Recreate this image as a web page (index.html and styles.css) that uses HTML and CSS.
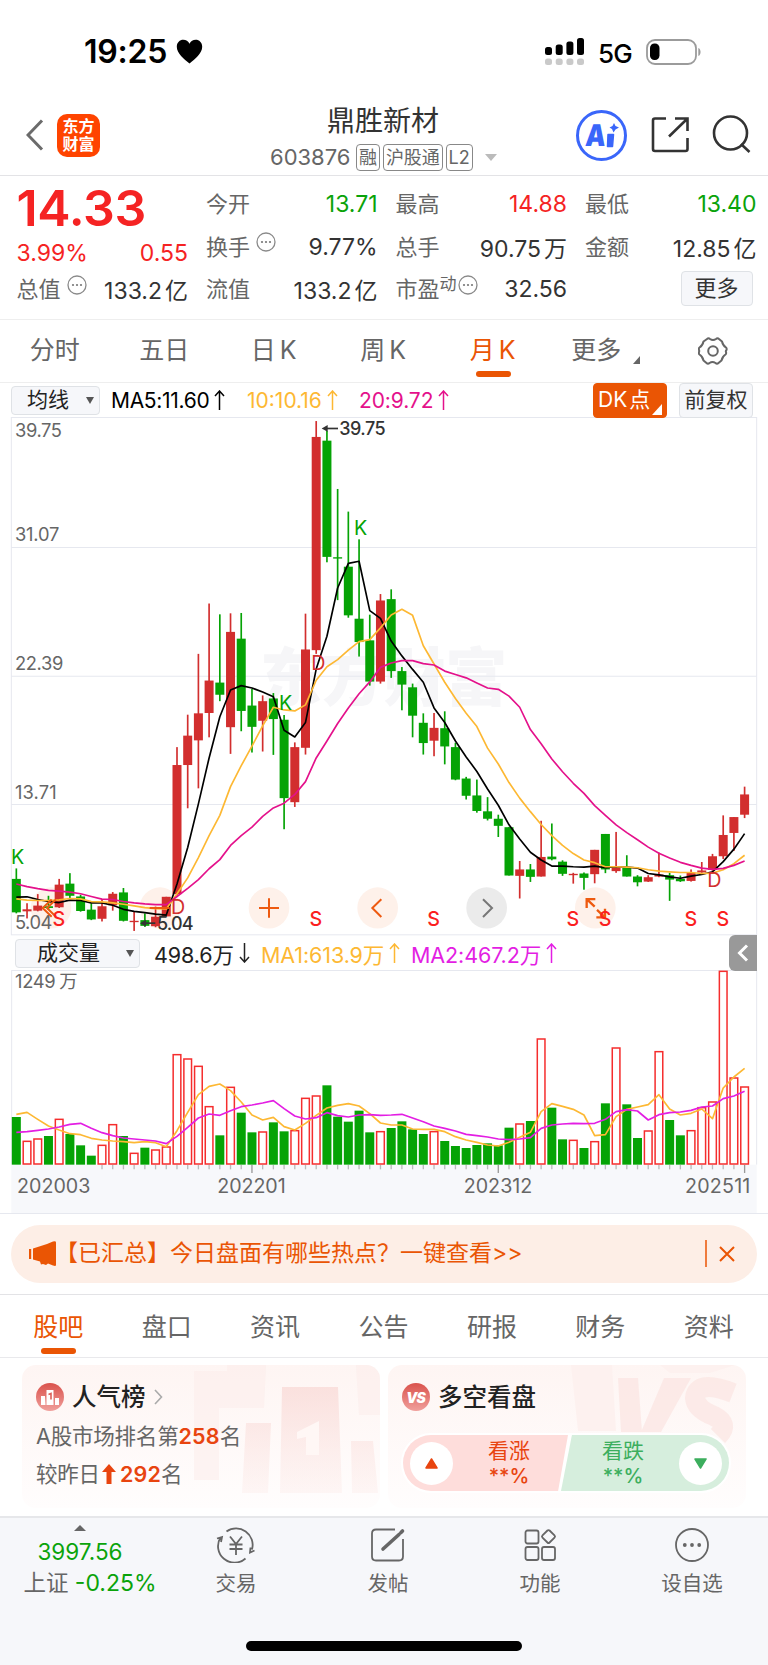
FILE: index.html
```html
<!DOCTYPE html>
<html lang="zh-CN">
<head>
    <meta charset="UTF-8">
    <meta name="viewport" content="width=device-width, initial-scale=1.0">
    <title>鼎胜新材 603876</title>
    <link rel="stylesheet" href="styles.css">
</head>
<body>
    <div class="status-bar">
        <span class="time">19:25</span>
        <svg class="heart" width="27" height="25" viewBox="0 0 27 25"><path d="M13.500 24.500C8 20 .8 14.500 .8 7.800.8 3.500 3.800.8 7.300.8c2.700 0 5 1.500 6.200 4C14.700 2.300 17 .8 19.700.8c3.500 0 6.500 2.700 6.500 7 0 6.700-7.200 12.200-12.700 16.700z"/></svg>
        <svg class="signal" width="40" height="28" viewBox="0 0 40 28">
            <g fill="#000"><rect x="0" y="9" width="7" height="8" rx="2.500"/><rect x="10.700" y="6.500" width="7" height="10.500" rx="2.500"/><rect x="21.400" y="3.500" width="7" height="13.500" rx="2.500"/><rect x="32" y="0" width="7" height="17" rx="2.500"/></g>
            <g fill="#c9c9c9"><rect x="0" y="20.500" width="7" height="6.500" rx="2.500"/><rect x="10.700" y="20.500" width="7" height="6.500" rx="2.500"/><rect x="21.400" y="20.500" width="7" height="6.500" rx="2.500"/><rect x="32" y="20.500" width="7" height="6.500" rx="2.500"/></g>
        </svg>
        <span class="network">5G</span>
        <svg class="battery" width="56" height="26" viewBox="0 0 56 26"><rect x="1" y="1" width="49" height="24" rx="8" fill="none" stroke="#9b9b9b" stroke-width="1.800"/><rect x="4" y="4.500" width="9.500" height="16.500" rx="4.500"/><path d="M52.300 9v8c3-1 3-7 0-8z" fill="#9b9b9b"/></svg>
    </div>

    <div class="header">
        <svg class="back" width="18" height="32" viewBox="0 0 18 32"><path d="M16 1.500 2 16l14 14.500" fill="none" stroke="#6b6b6b" stroke-width="3"/></svg>
        <div class="logo">东方<br>财富</div>
        <div class="stock">
            <div class="stock-name">鼎胜新材</div>
            <div class="stock-code"><span class="code">603876</span><i class="tag">融</i><i class="tag">沪股通</i><i class="tag">L2</i><b class="drop"></b></div>
        </div>
        <div class="ai"><span>A</span><svg width="13" height="25" viewBox="0 0 13 25"><path d="M2 11.500h5.500l-1 12H1.500z" fill="#3a66fa" stroke="#3a66fa" stroke-width="1.500" stroke-linejoin="round"/><path d="M8 0l1.500 3L13 4.500 9.500 6.500 7.500 9.500 6 6 3.500 4.500 6.500 3z" fill="#3a66fa"/></svg></div>
        <svg class="share" width="38" height="38" viewBox="0 0 38 38" fill="none" stroke="#333" stroke-width="2.600"><path d="M15 2.500H4q-2 0-2 2V33q0 2 2 2h30.500q2 0 2-2V22"/><path d="M24 2.500h12.500V15M36 3 18 20.500"/></svg>
        <svg class="search" width="39" height="39" viewBox="0 0 39 39" fill="none" stroke="#333" stroke-width="2.600"><circle cx="18.500" cy="18" r="16.500"/><path d="m29 29 8.500 8"/></svg>
    </div>

    <div class="quote">
        <div class="quote-col">
            <div class="price">14.33</div>
            <div class="row change red"><span>3.99%</span><span>0.55</span></div>
            <div class="row"><label>总值<svg class="dots" width="20" height="20"><use href="#more-dots"/></svg></label><span>133.2<em>亿</em></span></div>
        </div>
        <div class="quote-col">
            <div class="row"><label>今开</label><span class="green">13.71</span></div>
            <div class="row"><label>换手<svg class="dots" width="20" height="20"><use href="#more-dots"/></svg></label><span>9.77%</span></div>
            <div class="row"><label>流值</label><span>133.2<em>亿</em></span></div>
        </div>
        <div class="quote-col">
            <div class="row"><label>最高</label><span class="red">14.88</span></div>
            <div class="row"><label>总手</label><span>90.75<em>万</em></span></div>
            <div class="row"><label>市盈<sup>动</sup><svg class="dots near" width="20" height="20"><use href="#more-dots"/></svg></label><span>32.56</span></div>
        </div>
        <div class="quote-col">
            <div class="row"><label>最低</label><span class="green">13.40</span></div>
            <div class="row"><label>金额</label><span>12.85<em>亿</em></span></div>
            <div class="row"><button class="more">更多</button></div>
        </div>
    </div>

    <div class="period-tabs">
        <span>分时</span><span>五日</span><span>日<u>K</u></span><span>周<u>K</u></span><span class="active">月<u>K</u></span><span class="with-corner">更多<i></i></span>
        <svg width="30" height="28" viewBox="0 0 30 28" fill="none" stroke="#666" stroke-width="2"><path d="M9 2q1.500-1.500 3 0 3 2 6 0 1.500-1.500 3 0l3 2.500q.8 4 4 6 1 .8.500 2.500-1 1-.5 2 .5 1.700-.5 2.500-3.200 2-4 6l-3 2.500q-1.500 1.500-3 0-3-2-6 0-1.500 1.500-3 0l-3-2.500q-.8-4-4-6-1-.8-.5-2.500.5-1 0-2-.5-1.700.5-2.500 3.200-2 4-6z"/><circle cx="15" cy="14" r="4.800"/></svg>
    </div>

    <div class="ma-bar">
        <div class="select select-ma">均线<i></i></div>
        <span class="ma5">MA5:11.60<svg class="arrow"><use href="#arrow-up"/></svg></span>
        <span class="ma10">10:10.16<svg class="arrow"><use href="#arrow-up"/></svg></span>
        <span class="ma20">20:9.72<svg class="arrow"><use href="#arrow-up"/></svg></span>
        <button class="dk">DK<b>点</b><i></i></button>
        <button class="adjust">前复权</button>
    </div>

    <svg id="kline" class="kline" width="768" height="519" viewBox="0 21 2304 1536" preserveAspectRatio="none"></svg>

    <div class="volume-bar">
        <div class="select select-vol">成交量<i></i></div>
        <span class="vol-now">498.6万<svg class="arrow"><use href="#arrow-down"/></svg></span>
        <span class="vol-ma1">MA1:613.9万<svg class="arrow"><use href="#arrow-up"/></svg></span>
        <span class="vol-ma2">MA2:467.2万<svg class="arrow"><use href="#arrow-up"/></svg></span>
        <div class="collapse"><svg width="12" height="18" viewBox="0 0 12 18"><path d="M10 1.500 2.500 9l7.500 7.500" fill="none" stroke="#fff" stroke-width="3"/></svg></div>
    </div>

    <svg id="volume" class="volume" width="768" height="244" viewBox="0 120 2304 732"></svg>

    <div class="notice">
        <svg width="28" height="26" viewBox="0 0 28 26" fill="#ea5504"><path d="M0 8h2.200v10H0zM4 7.500 18 3l6-2.500q3-1 3 1v22.500q0 1.500-3 .5l-5-2-2 1.500-3-1-2 .5-1-3-7-2z"/></svg>
        <span>【已汇总】今日盘面有哪些热点？一键查看&gt;&gt;</span>
        <svg class="close" width="24" height="28" viewBox="0 0 24 28" fill="none" stroke="#ea5504" stroke-width="1.800"><path d="M1 0v27" stroke-width="1.500"/></svg>
        <svg class="cross" width="16" height="16" viewBox="0 0 16 16" fill="none" stroke="#ea5504" stroke-width="2"><path d="m1 1 14 14M15 1 1 15"/></svg>
    </div>

    <div class="info-tabs">
        <span class="active">股吧</span><span>盘口</span><span>资讯</span><span>公告</span><span>研报</span><span>财务</span><span>资料</span>
    </div>

    <div class="cards">
        <div class="card">
            <svg class="card-bg" width="358" height="143" viewBox="0 0 358 143">
                <defs><linearGradient id="fade" x1="0" y1="0" x2="0" y2="1"><stop offset="0" stop-color="#f9d9d6" stop-opacity=".75"/><stop offset="1" stop-color="#fbe6e3" stop-opacity=".3"/></linearGradient></defs>
                <path d="M172 6h33V0h39l-2 43h-45v72h-25zM334 0h24v50h-21z" fill="#fcecea" opacity=".5"/>
                <path d="M260 22h56l4 106h-62zM224 58h25l-3 70h-26zM329 76h22l5 52h-26z" fill="url(#fade)"/>
                <path d="M275 67 297 56v34h-13V72l-9 2z" fill="#fff7f5"/>
            </svg>
            <div class="card-title">
                <svg width="28" height="28" viewBox="0 0 28 28"><use href="#red-ball"/><path d="M5 13h4l.5 9H5zM10.500 7h7v15h-7zM19 15h4v7h-4z" fill="#fff"/><path d="m12.500 11.500 2.500-1v6" stroke="#dc6059" fill="none" stroke-width="1.600"/></svg>
                人气榜
                <svg width="9" height="16" viewBox="0 0 9 16"><path d="m1 1 6.500 7L1 15" fill="none" stroke="#aaa" stroke-width="1.600"/></svg>
            </div>
            <p>A股市场排名第<b>258</b>名</p>
            <p class="compare">较昨日<svg width="14" height="20" viewBox="0 0 14 20"><path d="M7 0 14 8H9.500v12h-5V8H0z" fill="#e8440f"/></svg><b>292</b>名</p>
        </div>
        <div class="card">
            <svg class="card-bg" width="358" height="143" viewBox="0 0 358 143">
                <path d="M183 0h41l4 66h-38zM272 0h75l-25 8h-40z" fill="#fdf1ef"/>
                <path d="M230 13h20l4 54h-21zM276 13h27L273 67h-20z" fill="#fbe6e3" opacity=".8"/>
                <path d="M345 28q-36-14-38 5 1 11 19 18 16 8 4 20" fill="none" stroke="#fbe6e3" stroke-width="20" opacity=".75"/>
            </svg>
            <div class="card-title">
                <svg width="28" height="28" viewBox="0 0 28 28"><use href="#red-ball"/><text x="13.500" y="19.500" text-anchor="middle" class="vs">VS</text></svg>
                多空看盘
            </div>
            <div class="vote">
                <div class="vote-up"><i><svg width="13" height="11" viewBox="0 0 13 11"><path d="M6.500 1 12 10H1z" fill="#e8440f" stroke="#e8440f" stroke-width="1.500" stroke-linejoin="round"/></svg></i><span>看涨<br><b>**%</b></span></div>
                <div class="vote-down"><span>看跌<br><b>**%</b></span><i><svg width="13" height="11" viewBox="0 0 13 11"><path d="M6.500 10 12 1H1z" fill="#3cae5e" stroke="#3cae5e" stroke-width="1.500" stroke-linejoin="round"/></svg></i></div>
            </div>
        </div>
    </div>

    <div class="bottom-bar">
        <div class="index">
            <i></i>
            <span class="green">3997.56</span>
            <span class="index-change">上证 <b class="green">-0.25%</b></span>
        </div>
        <div class="nav-item">
            <svg width="40" height="36" viewBox="0 0 40 36" fill="none" stroke="#666" stroke-width="1.800"><path d="M10.500 4.500a16.500 16.500 0 0 1 25.500 18M29.500 31.500A16.500 16.500 0 0 1 4.500 10.500M1 11.500l5-1.500-1 5M38.500 23.500l-4.500 2 .5-5M14 9.500l6 7.500 6-7.500M13.500 17.500h13M13.500 22h13M20 17v11"/></svg>
            交易
        </div>
        <div class="nav-item">
            <svg width="36" height="36" viewBox="0 0 36 36" fill="none" stroke="#666" stroke-width="1.800"><path d="M25 2.500H6q-4 0-4 4v23q0 4 4 4h23q4 0 4-4V12"/><path d="m13 22 16-14.500M31 5.500l1.500-1.500" stroke-width="3.600" stroke-linecap="round"/></svg>
            发帖
        </div>
        <div class="nav-item">
            <svg width="36" height="36" viewBox="0 0 36 36" fill="none" stroke="#666" stroke-width="1.800"><rect x="3.500" y="3.500" width="13" height="13" rx="2"/><rect x="3.500" y="20" width="13" height="13" rx="2"/><rect x="20" y="20" width="13" height="13" rx="2"/><rect x="21.500" y="4.500" width="10" height="10" rx="1.500" transform="rotate(45 26.500 9.500)"/></svg>
            功能
        </div>
        <div class="nav-item">
            <svg width="36" height="36" viewBox="0 0 36 36"><circle cx="18" cy="18" r="16" fill="none" stroke="#666" stroke-width="1.800"/><g fill="#666"><circle cx="10.800" cy="18" r="1.900"/><circle cx="18" cy="18" r="1.900"/><circle cx="25.200" cy="18" r="1.900"/></g></svg>
            设自选
        </div>
        <div class="home-indicator"></div>
    </div>

    <!-- 公用图标 -->
    <svg class="symbols">
        <symbol id="more-dots" viewBox="0 0 20 20"><circle cx="10" cy="10" r="9" fill="none" stroke="#8a8a8a" stroke-width="1.300"/><g fill="#777"><circle cx="6" cy="10" r="1.100"/><circle cx="10" cy="10" r="1.100"/><circle cx="14" cy="10" r="1.100"/></g></symbol>
        <symbol id="arrow-up" viewBox="0 0 11 20"><path d="M5.500 20V1M1 6l4.500-5L10 6" fill="none" stroke="currentColor" stroke-width="1.500"/></symbol>
        <symbol id="arrow-down" viewBox="0 0 11 20"><path d="M5.500 0v19M1 14l4.500 5 4.500-5" fill="none" stroke="currentColor" stroke-width="1.500"/></symbol>
        <symbol id="red-ball" viewBox="0 0 28 28"><linearGradient id="ball" x1="0" y1="0" x2="0" y2="1"><stop offset="0" stop-color="#da524c"/><stop offset="1" stop-color="#f0a09c"/></linearGradient><circle cx="14" cy="14" r="14" fill="url(#ball)"/></symbol>
    </svg>

    <script src="chart.js"></script>
</body>
</html>
```
FILE: styles.css
```css
* {
    box-sizing: border-box;
}

body {
    margin: 0;
    width: 768px;
    height: 1665px;
    overflow: hidden;
    background: #fff;
    color: #333;
    font-family: Inter, "Noto Sans CJK SC", sans-serif;
    font-size: 22px;
}

i, em, u {
    font-style: normal;
    text-decoration: none;
}

button {
    font: inherit;
    color: #333;
    padding: 0;
    background: #f6f7fa;
    border: 1px solid #dfe2e6;
    border-radius: 4px;
}

.red { color: #f52323; }
.green { color: #0aa30a; }

.symbols {
    position: absolute;
    width: 0;
    height: 0;
}

/* 状态栏 */
.status-bar {
    display: flex;
    align-items: center;
    height: 103px;
    padding: 0 66px 0 84px;
    color: #000;
}

.time {
    width: 83px;
    font-size: 32px;
    font-weight: 600;
    letter-spacing: -0.2px;
}

.heart { margin-left: 9px; }
.signal { margin-left: auto; }

.network {
    width: 34px;
    margin: 3px 14px 0 13px;
    font-size: 26px;
    font-weight: 500;
    letter-spacing: -0.8px;
}

/* 标题栏 */
.header {
    display: flex;
    align-items: center;
    height: 73px;
    padding: 0 17px 9px 26px;
    border-bottom: 1px solid #e3e3e6;
}

.back, .logo { margin-top: 1px; }

.logo {
    width: 43px;
    height: 43px;
    margin-left: 13px;
    border-radius: 10px;
    background: #ff4400;
    color: #fff;
    font-size: 16px;
    font-weight: 700;
    line-height: 18px;
    padding-top: 3px;
    text-align: center;
}

.stock {
    width: 250px;
    margin: 7px 0 0 158px;
}

.stock-name {
    text-align: center;
    font-size: 28px;
    line-height: 38px;
}

.stock-code {
    display: flex;
    align-items: center;
    height: 34px;
    margin-left: 12px;
    gap: 3px;
    color: #666;
    white-space: nowrap;
}

.code { width: 83px; }

.tag {
    height: 27px;
    padding: 0 2px;
    border: 1px solid #888;
    border-radius: 4px;
    font-size: 18px;
    line-height: 25px;
    letter-spacing: -0.1px;
}

.drop {
    margin-left: 9px;
    border: 6px solid transparent;
    border-top: 7px solid #bbb;
    border-bottom: 0;
}

.ai {
    display: flex;
    align-items: center;
    justify-content: center;
    width: 51px;
    height: 51px;
    margin: 1px 0 0 auto;
    border: 3px solid #3a66fa;
    border-radius: 50%;
    color: #3a66fa;
    font-size: 30px;
    font-weight: 900;
}

.ai span { transform: skewX(-5deg) scaleX(0.85); }
.ai svg { margin-left: -2px; }
.share { margin-left: 24px; }
.search { margin-left: 23px; }

/* 行情数据 */
.quote {
    display: grid;
    grid-template-columns: repeat(4, 171.500px);
    column-gap: 18px;
    height: 144px;
    padding: 7px 0 0 16.500px;
    border-bottom: 1px solid #eee;
}

.row {
    display: flex;
    justify-content: space-between;
    align-items: center;
    height: 42.500px;
}

.row span {
    font-size: 23px;
    letter-spacing: 0;
    white-space: nowrap;
}

.row label {
    display: flex;
    align-items: center;
    color: #666;
    line-height: 40px;
}

.row em { margin-left: 3px; }

.price {
    height: 49px;
    color: #f52323;
    font-size: 50px;
    line-height: 50px;
    font-weight: 600;
    letter-spacing: -0.3px;
}

.change { height: 36px; padding-top: 5px; }

.dots { margin: -9px 0 0 6px; }
.dots.near { margin-left: 1px; }

sup {
    font-size: 17px;
    margin-top: -10px;
    line-height: 20px;
}

.more {
    width: 72px;
    height: 35px;
    margin: -2px 4px 0 auto;
    line-height: 32px;
}

/* 周期切换 */
.period-tabs {
    display: flex;
    align-items: center;
    height: 63px;
    border-bottom: 1px solid #eee;
    color: #666;
    font-size: 25px;
}

.period-tabs span {
    position: relative;
    width: 109.500px;
    height: 62px;
    line-height: 61px;
    text-align: center;
}

.period-tabs u { margin-left: 4px; }
.period-tabs svg { margin: 0 0 0 41px; }

.active { color: #ea5504; }

.active::after {
    content: "";
    position: absolute;
    left: 50%;
    bottom: 5px;
    width: 35px;
    height: 6px;
    margin-left: -17px;
    border-radius: 3px;
    background: #ea5504;
}

.period-tabs .with-corner { padding-right: 12px; }

.with-corner i {
    position: absolute;
    right: 17px;
    bottom: 18px;
    border-left: 7px solid transparent;
    border-bottom: 8px solid #666;
}

/* 均线 / 成交量 工具栏 */
.ma-bar, .volume-bar {
    display: flex;
    align-items: center;
    position: relative;
    color: #222;
    white-space: nowrap;
}

.ma-bar {
    height: 34px;
    padding: 0 15px 0 11px;
    font-size: 21px;
    letter-spacing: -0.4px;
}

.ma-bar span { display: flex; align-items: center; }

.select {
    display: flex;
    align-items: center;
    justify-content: space-between;
    height: 29px;
    line-height: 26px;
    background: #f6f7fa;
    border: 1px solid #dfe2e6;
    border-radius: 4px;
    letter-spacing: 0;
}

.select i {
    border: 4px solid transparent;
    border-top: 7px solid #555;
    border-bottom: 0;
}

.select-ma { width: 89px; padding: 0 5px 0 15px; }
.select-vol { width: 125px; padding: 0 5px 0 21px; font-size: 21px; }

.arrow { width: 11px; height: 20px; margin-left: 5px; }

.ma5 { width: 136px; margin-left: 11px; color: #000; letter-spacing: -0.3px; }
.ma10 { width: 112px; color: #fdb833; letter-spacing: 0; }
.ma20 { color: #e4118b; letter-spacing: -0.1px; }

.dk {
    position: relative;
    width: 74px;
    height: 35px;
    margin-left: auto;
    background: #ea5504;
    border-color: #ea5504;
    color: #fff;
    text-align: left;
    line-height: 32px;
    padding-left: 4px;
}

.dk b { font-weight: 400; margin-left: 2px; }

.dk i {
    position: absolute;
    right: 4px;
    bottom: 2px;
    border-left: 10px solid transparent;
    border-bottom: 11px solid #fff;
}

.adjust {
    width: 74px;
    height: 35px;
    margin-left: 12px;
    letter-spacing: 0;
    line-height: 32px;
}

.kline, .volume { display: block; }

.volume-bar {
    height: 34px;
    padding-left: 15px;
    font-size: 21.500px;
    letter-spacing: -0.1px;
}

.volume-bar span { display: flex; align-items: center; }
.vol-now { width: 107px; margin-left: 14px; }
.vol-ma1 { width: 150px; color: #fdb833; }
.vol-ma2 { color: #e31ee3; }

.collapse {
    display: flex;
    align-items: center;
    justify-content: center;
    width: 28px;
    height: 36px;
    margin: -1px 11px 0 auto;
    border-radius: 6px 0 0 6px;
    background: #999;
}

/* 图表文字 */
.axis { font-size: 55px; fill: #666; }
.date { font-size: 59px; fill: #666; }
.mark { font-size: 59px; }
.sell { font-weight: 500; }
.extreme { font-size: 54px; font-weight: 500; fill: #333; }
.watermark { font-size: 186px; font-weight: 900; fill: #f6f6f8; }

/* 提示条 */
.notice {
    display: flex;
    align-items: center;
    height: 58px;
    margin: 11px;
    padding: 0 22px 0 18px;
    border-radius: 29px;
    background: #fdeee6;
    color: #ea5504;
    font-size: 23px;
}

.notice span { white-space: nowrap; line-height: 54px; margin: -3px 0 0 -2px; }
.notice .close { margin-left: auto; }
.notice .cross { margin-right: 0; margin-left: -10px; }

/* 资讯标签 */
.info-tabs {
    display: flex;
    height: 64px;
    padding: 0 5px 0 4px;
    border-top: 1px solid #e3e3e6;
    border-bottom: 1px solid #e9e9ec;
    color: #666;
    font-size: 25px;
    line-height: 64px;
    text-align: center;
}

.info-tabs span {
    position: relative;
    flex: 1;
}

.info-tabs .active::after { bottom: 3px; }

/* 卡片 */
.cards {
    display: flex;
    gap: 8px;
    height: 158px;
    padding: 7px 22px 0;
}

.card {
    position: relative;
    width: 358px;
    height: 143px;
    padding: 16px 14px;
    border-radius: 14px;
    background: linear-gradient(#fef5f3, #fffdfd);
    color: #666;
    overflow: hidden;
}

.card > * { position: relative; }

.card .card-bg {
    position: absolute;
    left: 0;
    top: 0;
}

.card-title {
    display: flex;
    align-items: center;
    gap: 8px;
    height: 32px;
    line-height: 28px;
    color: #222;
    font-size: 24.500px;
    font-weight: 500;
}

.card p {
    margin: 7px 0 0;
    font-size: 21.500px;
    line-height: 32px;
    white-space: nowrap;
    letter-spacing: -0.2px;
}

.card p b { color: #e8440f; font-weight: 600; letter-spacing: 0.2px; }
.card .compare { margin-top: 6px; }
.compare svg { margin: 0 4px -2px 2px; }

.vs {
    font-size: 14px;
    font-weight: 900;
    font-style: italic;
    fill: #fff;
    letter-spacing: -1px;
}

.vote {
    display: flex;
    width: 330px;
    height: 60px;
    margin: 20px 0 0 -1px;
    border: 2px solid #fff;
    border-radius: 30px;
    overflow: hidden;
    background: #fff;
    font-size: 21px;
    line-height: 25px;
    text-align: center;
}

.vote b { font-size: 20px; font-weight: 500; }

.vote div {
    display: flex;
    align-items: center;
    justify-content: space-between;
    width: 165px;
    padding: 0 7px;
}

.vote i {
    display: flex;
    align-items: center;
    justify-content: center;
    width: 43px;
    height: 43px;
    border-radius: 50%;
    background: #fff;
}

.vote-up {
    background: #fedddb;
    color: #e8440f;
    clip-path: polygon(0 0, 100% 0, 94% 100%, 0 100%);
}

.vote-up span { margin-right: 31px; }

.vote-down {
    margin-left: -7px;
    background: #d6eedd;
    color: #3cae5e;
    clip-path: polygon(6.500% 0, 100% 0, 100% 100%, 0 100%);
}

.vote .vote-down { width: 168px; }
.vote-down span { margin-left: 34px; }

/* 底部导航 */
.bottom-bar {
    position: relative;
    display: flex;
    height: 149px;
    padding: 9px 0 0 4px;
    border-top: 2px solid #e6e7ea;
    background: #f6f7fa;
    color: #666;
    font-size: 20.500px;
}

.index {
    display: flex;
    flex-direction: column;
    align-items: center;
    width: 156px;
    padding-right: 4px;
    font-size: 22.500px;
    line-height: 31px;
    white-space: nowrap;
}

.index-change { margin-left: 20px; }
.index b { font-weight: 400; font-size: 23px; }

.index i {
    margin: -2px 0 5px;
    border: 6px solid transparent;
    border-top: 0;
    border-bottom: 6px solid #666;
}

.nav-item {
    display: flex;
    flex-direction: column;
    align-items: center;
    width: 152px;
    line-height: 41px;
}

.home-indicator {
    position: absolute;
    left: 246px;
    bottom: 14px;
    width: 276px;
    height: 10px;
    border-radius: 5px;
    background: #000;
}
```
FILE: chart.js
```js
const RED = '#d22e2e';
const GREEN = '#05a305';
const START = 49;
const STEP = 32.13;

// [颜色, 最高, 实体上沿, 实体下沿, 最低]
const candles = [
    ['g',1357,1388,1487,1490],['r',1460,1478,1484,1505],['r',1433,1467,1482,1484],['g',1438,1469,1474,1480],
    ['r',1388,1405,1472,1474],['g',1371,1402,1438,1445],['g',1435,1440,1483,1485],['g',1460,1479,1508,1510],
    ['r',1448,1469,1506,1514],['r',1427,1432,1466,1482],['g',1415,1428,1512,1514],['r',1484,1512,1516,1542],
    ['g',1490,1510,1527,1530],['r',1470,1500,1528,1531],['r',1441,1441,1499,1500],['r',998,1051,1433,1437],
    ['r',902,964,1051,1179],['r',722,898,978,1120],['r',573,801,897,969],['g',605,807,843,862],
    ['r',602,657,939,1018],['g',601,677,891,951],['g',826,875,938,1014],['r',845,862,920,1011],
    ['g',838,854,915,1021],['g',903,917,1149,1241],['r',984,998,1161,1175],['r',603,709,1000,1020],
    ['r',33,80,711,722],['g',62,91,435,451],['g',234,436,440,563],['g',301,464,608,615],
    ['g',383,618,687,730],['g',606,682,804,816],['r',545,564,804,810],['g',531,560,773,793],
    ['g',761,773,813,889],['g',810,821,905,969],['g',898,926,986,1020],['r',897,941,979,1025],
    ['g',892,942,996,1049],['g',985,998,1094,1096],['g',1086,1091,1142,1153],['g',1094,1141,1187,1192],
    ['g',1146,1188,1210,1215],['g',1198,1210,1231,1264],['g',1234,1235,1378,1378],['r',1335,1360,1379,1446],
    ['g',1344,1360,1382,1397],['r',1216,1323,1381,1381],['g',1224,1322,1330,1333],['g',1333,1337,1373,1379],
    ['r',1370,1373,1377,1402],['g',1369,1372,1385,1420],['r',1302,1302,1374,1401],['g',1255,1255,1360,1371],
    ['r',1249,1354,1365,1370],['g',1318,1355,1381,1381],['g',1377,1381,1398,1410],['r',1377,1383,1396,1397],
    ['r',1310,1375,1381,1383],['g',1370,1377,1390,1453],['g',1378,1388,1395,1397],['r',1360,1370,1394,1396],
    ['r',1338,1363,1369,1370],['r',1314,1321,1361,1364],['r',1200,1258,1321,1329],['r',1205,1205,1252,1305],
    ['r',1115,1138,1198,1208]
];

const ma5 = [1442,1441,1449,1455,1458,1451,1452,1459,1459,1466,1478,1484,1488,1492,1495,1403,1295,1166,1030,908,829,816,823,835,849,948,968,925,767,670,527,454,448,594,617,684,728,768,806,882,925,980,1027,1070,1122,1170,1228,1270,1309,1332,1350,1350,1352,1353,1350,1355,1352,1353,1356,1372,1376,1382,1386,1380,1375,1367,1337,1300,1254];
const ma10 = [1447,1451,1452,1452,1450,1446,1447,1455,1456,1459,1463,1468,1473,1476,1477,1432,1385,1325,1260,1200,1115,1053,995,935,880,888,891,873,800,760,739,711,686,680,645,607,590,608,698,752,806,854,898,937,1001,1048,1103,1149,1189,1227,1260,1289,1313,1332,1340,1352,1352,1353,1355,1361,1365,1367,1369,1369,1372,1371,1361,1343,1318];
const ma20 = [1403,1411,1417,1422,1424,1427,1432,1440,1448,1449,1455,1459,1462,1464,1464,1440,1416,1390,1358,1331,1289,1260,1235,1203,1178,1164,1138,1100,1030,980,928,882,840,805,762,749,742,742,751,755,773,783,793,808,823,827,847,880,946,988,1033,1071,1105,1135,1171,1200,1228,1251,1272,1294,1312,1326,1339,1348,1356,1360,1357,1348,1335];

// 成交量柱顶
const volumes = [561,632,625,618,566,612,646,677,644,582,618,668,653,658,649,372,385,407,528,616,470,548,607,604,577,604,600,503,496,466,560,575,542,607,603,594,574,598,612,603,633,648,654,645,640,646,593,580,573,325,533,628,629,654,633,520,352,523,624,601,363,570,616,600,531,514,122,442,469];
const volMa1 = [553,547,568,588,600,611,614,625,630,633,635,638,635,638,650,602,547,494,469,462,482,516,555,570,562,590,600,580,556,534,526,521,528,551,579,585,585,597,598,598,605,620,630,637,645,648,637,622,607,545,521,529,538,555,617,614,560,538,531,524,494,537,555,550,537,566,474,441,415];
const volMa2 = [607,605,601,597,591,583,580,595,608,617,624,627,630,633,641,619,592,564,552,556,542,530,525,519,512,536,558,567,563,548,557,561,555,554,556,555,553,564,575,588,595,603,613,617,621,627,629,627,623,595,585,582,580,581,580,568,545,539,543,570,554,548,546,541,531,528,506,498,484];

const cx = i => START + i * STEP;

function rect(x, y, w, h, fill, extra = '') {
    return `<rect x="${x.toFixed(1)}" y="${y}" width="${w}" height="${h}" fill="${fill}" ${extra}/>`;
}

function line(x1, y1, x2, y2, color = '#e6e8ef', width = 3) {
    return `<path d="M${x1} ${y1}L${x2} ${y2}" stroke="${color}" stroke-width="${width}"/>`;
}

function text(x, y, str, cls, len, fill) {
    return `<text x="${x}" y="${y}" class="${cls}" ${len ? `textLength="${len}"` : ''} ${fill ? `fill="${fill}"` : ''}>${str}</text>`;
}

function curve(data, color) {
    const points = data.map((y, i) => `${cx(i).toFixed(1)},${y}`).join(' ');
    return `<polyline points="${points}" fill="none" stroke="${color}" stroke-width="5" stroke-linejoin="round"/>`;
}

function drawKline() {
    let s = text(780, 860, '东方财富', 'watermark', 742);
    s += `<rect x="34" y="22.500" width="2236" height="1531" fill="none" stroke="#e6e8ef" stroke-width="3"/>`;
    [407, 788, 1168].forEach(y => { s += line(34, y, 2270, y); });

    // 悬浮按钮底色
    [153, 480, 807, 1133, 1786].forEach(x => { s += `<circle cx="${x}" cy="1474" r="61" fill="#fef1ea"/>`; });
    s += '<circle cx="1460" cy="1474" r="61" fill="#ebebeb"/>';

    candles.forEach(([c, high, top, bottom, low], i) => {
        const color = c === 'r' ? RED : GREEN;
        s += rect(cx(i) - 2.5, high, 5, low - high, color);
        s += rect(cx(i) - 13.5, top, 27, bottom - top, color);
    });
    s += curve(ma5, '#000') + curve(ma10, '#fdb833') + curve(ma20, '#e4118b');

    s += text(45, 81, '39.75', 'axis', 141) + text(45, 389, '31.07', 'axis', 133)
        + text(45, 771, '22.39', 'axis', 145) + text(45, 1153, '13.71', 'axis', 125)
        + text(45, 1535, '5.04', 'axis', 112);

    s += '<g fill="none" stroke="#ee5a10" stroke-width="6">'
        + '<path d="M155 1449l-27 25 27 26M168 1449l-27 25 27 26M449 1474h60"/>'
        + '<path d="M777 1474h60M807 1445v58M1144 1448l-27 26 27 27"/>'
        + '<path d="M1760 1474v-26h26M1760 1448l24 22M1815 1476v26h-26M1815 1502l-24-22" stroke-width="7"/></g>'
        + '<path d="M1449 1448l27 26-27 27" fill="none" stroke="#777" stroke-width="6"/>';

    [[33, 1343], [837, 888], [1062, 370]].forEach(([x, y]) => { s += text(x, y, 'K', 'mark', 0, GREEN); });
    [[513, 1491], [934, 769], [2122, 1411]].forEach(([x, y]) => { s += text(x, y, 'D', 'mark', 0, RED); });
    [4, 28, 39, 52, 55, 63, 66].forEach(i => { s += text(cx(i) - 20, 1528, 'S', 'mark sell', 0, '#fb1f1f'); });

    s += line(977, 55, 1014, 55, '#333', 5) + '<path d="M965 55l18-10v20z" fill="#333"/>' + text(1018, 75, '39.75', 'extreme', 139);
    s += line(432, 1519, 466, 1519, '#333', 5) + '<path d="M420 1519l18-10v20z" fill="#333"/>' + text(471, 1539, '5.04', 'extreme', 110);
    document.getElementById('kline').innerHTML = s;
}

function drawVolume() {
    let s = rect(34, 704, 2236, 148, '#f7f8fb');
    s += line(34, 121.5, 2270, 121.5) + line(35, 121, 35, 704) + line(2270, 121, 2270, 704) + line(0, 850.5, 2304, 850.5);
    s += text(45, 173, '1249', 'axis', 122) + text(178, 173, '万', 'axis', 50);
    volumes.forEach((y, i) => {
        if (candles[i][0] === 'r') {
            s += rect(cx(i) - 11.5, y + 2, 23, 700 - y, '#fff', 'stroke="#f52d2d" stroke-width="4.5"');
        } else {
            s += rect(cx(i) - 13.5, y, 27, 704 - y, GREEN);
        }
        if (i > 7) {
            const major = i === 22 || i === 45 || i === 68;
            s += line(cx(i), 705, cx(i), major ? 729 : 718, major ? '#999' : '#bbb', 4);
        }
    });
    s += curve(volMa1, '#fdb833') + curve(volMa2, '#e31ee3');
    s += text(51, 788, '202003', 'date', 220) + text(652, 788, '202201', 'date', 205)
        + text(1391, 788, '202312', 'date', 206) + text(2055, 788, '202511', 'date', 196);
    document.getElementById('volume').innerHTML = s;
}

drawKline();
drawVolume();
```
